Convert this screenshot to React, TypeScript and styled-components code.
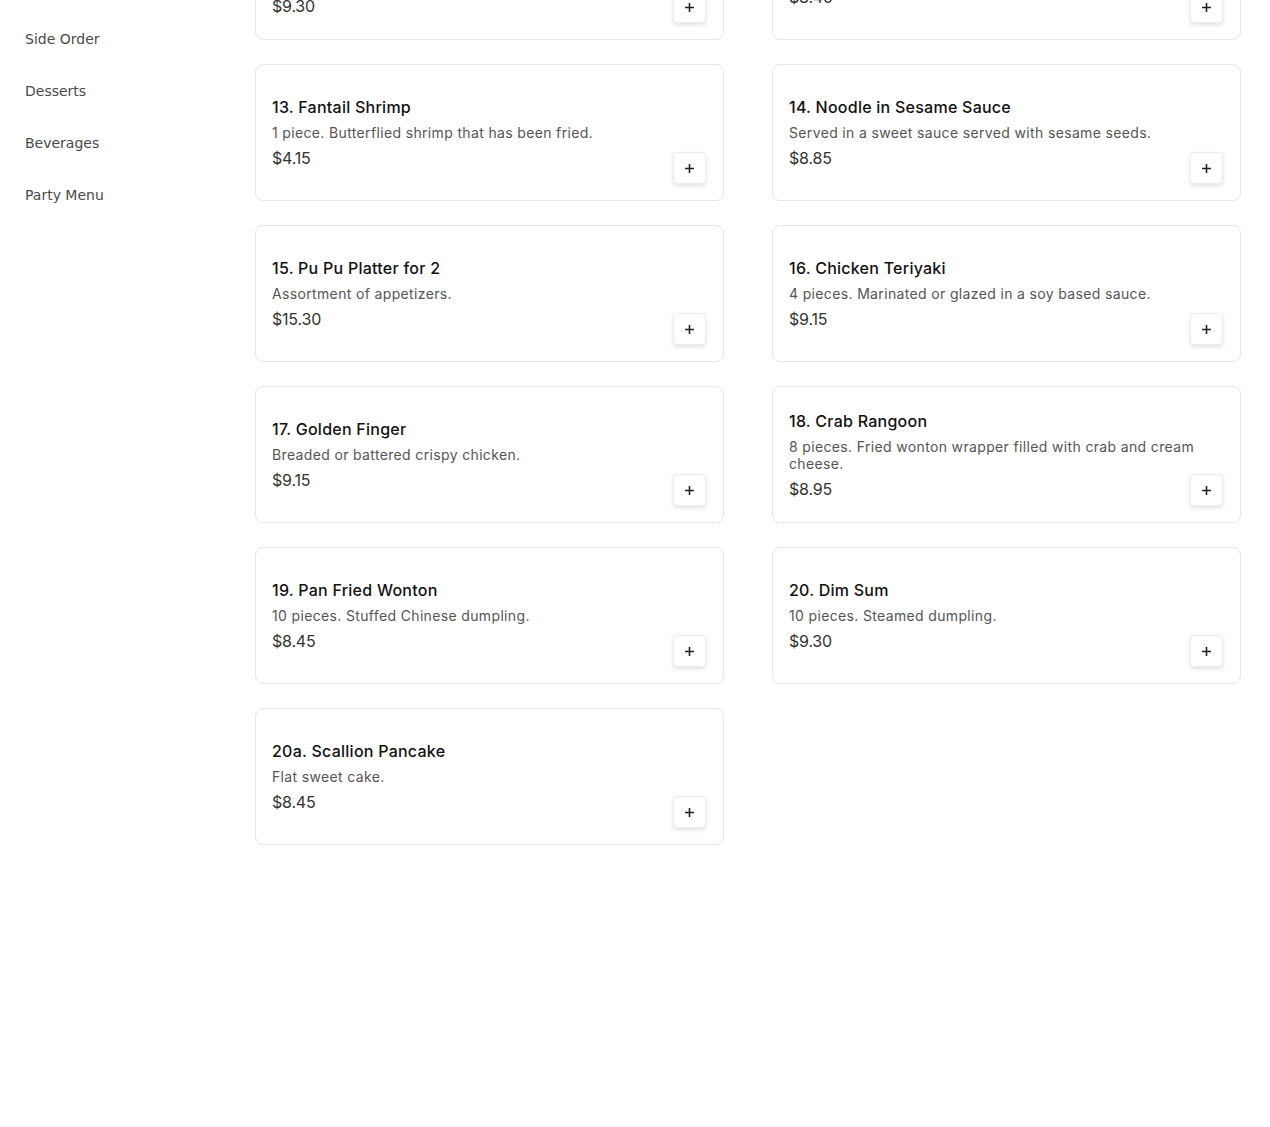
import styled, { createGlobalStyle } from "styled-components";

const GlobalStyle = createGlobalStyle`
  html, body {
    margin: 0;
    padding: 0;
    background: #ffffff;
  }

  body {
    overflow: hidden;
  }
`;

const Page = styled.div`
  display: flex;
  width: 1270px;
  min-height: 1127px;
  background: #fff;
`;

const SideNav = styled.nav`
  width: 255px;
  flex-shrink: 0;
  padding-top: 13px;
  box-sizing: border-box;
`;

const SideNavItem = styled.div`
  padding: 16px 25px;
  font-family: "DejaVu Sans", Verdana, sans-serif;
  font-size: 14px;
  line-height: 20px;
  color: #4a4a4a;
`;

const Menu = styled.main`
  flex: 1;
  padding-right: 29px;
  /* page is scrolled: the first row sits partly above the fold */
  margin-top: -97px;
`;

const Grid = styled.div`
  display: grid;
  grid-template-columns: 1fr 1fr;
  column-gap: 48px;
  row-gap: 24px;
`;

const Card = styled.div`
  display: grid;
  grid-template: 1fr / 1fr;
  height: 137px;
  box-sizing: border-box;
  padding: 16px;
  border: 1px solid #e6e6e6;
  border-radius: 8px;
  background: #fff;
  font-family: Inter, "Noto Sans", sans-serif;
`;

const Info = styled.div`
  grid-area: 1 / 1;
  align-self: center;
  display: flex;
  flex-direction: column;
`;

const Title = styled.div`
  font-size: 16px;
  line-height: 22px;
  font-weight: 500;
  color: #111;
  margin-bottom: 6px;
  letter-spacing: 0.25px;
`;

const Description = styled.div`
  font-size: 14px;
  line-height: 17px;
  color: #555;
  margin-bottom: 6px;
  letter-spacing: 0.35px;
`;

const Price = styled.div`
  font-size: 16px;
  line-height: 22px;
  color: #333;
  letter-spacing: -0.2px;
`;

const AddButton = styled.button`
  grid-area: 1 / 1;
  align-self: end;
  justify-self: end;
  margin-right: 1px;
  width: 33px;
  height: 32px;
  display: flex;
  align-items: center;
  justify-content: center;
  padding: 0;
  background: #fff;
  border: 1px solid #ededed;
  border-radius: 4px;
  box-shadow: 0 2px 4px rgba(0, 0, 0, 0.12);
  cursor: pointer;
`;

const PlusIcon = () => (
  <svg width="11" height="11" viewBox="0 0 11 11">
    <path d="M5.5 1v9M1 5.5h9" stroke="#222" strokeWidth="1.6" fill="none" />
  </svg>
);

const categories = ["Side Order", "Desserts", "Beverages", "Party Menu"];

const items = [
  {
    name: "11. Egg Roll",
    desc: "2 pieces. Crispy rolled wrapper filled with shredded cabbage, pork and vegetables.",
    price: "$9.30",
  },
  { name: "12. Boneless Spare Ribs", desc: "Sweet and savory barbecued pork.", price: "$8.45" },
  { name: "13. Fantail Shrimp", desc: "1 piece. Butterflied shrimp that has been fried.", price: "$4.15" },
  { name: "14. Noodle in Sesame Sauce", desc: "Served in a sweet sauce served with sesame seeds.", price: "$8.85" },
  { name: "15. Pu Pu Platter for 2", desc: "Assortment of appetizers.", price: "$15.30" },
  { name: "16. Chicken Teriyaki", desc: "4 pieces. Marinated or glazed in a soy based sauce.", price: "$9.15" },
  { name: "17. Golden Finger", desc: "Breaded or battered crispy chicken.", price: "$9.15" },
  {
    name: "18. Crab Rangoon",
    desc: "8 pieces. Fried wonton wrapper filled with crab and cream cheese.",
    price: "$8.95",
  },
  { name: "19. Pan Fried Wonton", desc: "10 pieces. Stuffed Chinese dumpling.", price: "$8.45" },
  { name: "20. Dim Sum", desc: "10 pieces. Steamed dumpling.", price: "$9.30" },
  { name: "20a. Scallion Pancake", desc: "Flat sweet cake.", price: "$8.45" },
];

const App = () => {
  return (
    <>
      <GlobalStyle />
      <Page>
        <SideNav>
          {categories.map((c) => (
            <SideNavItem key={c}>{c}</SideNavItem>
          ))}
        </SideNav>
        <Menu>
          <Grid>
            {items.map((item) => (
              <Card key={item.name}>
                <Info>
                  <Title>{item.name}</Title>
                  <Description>{item.desc}</Description>
                  <Price>{item.price}</Price>
                </Info>
                <AddButton aria-label={`Add ${item.name}`}>
                  <PlusIcon />
                </AddButton>
              </Card>
            ))}
          </Grid>
        </Menu>
      </Page>
    </>
  );
};

export default App;
